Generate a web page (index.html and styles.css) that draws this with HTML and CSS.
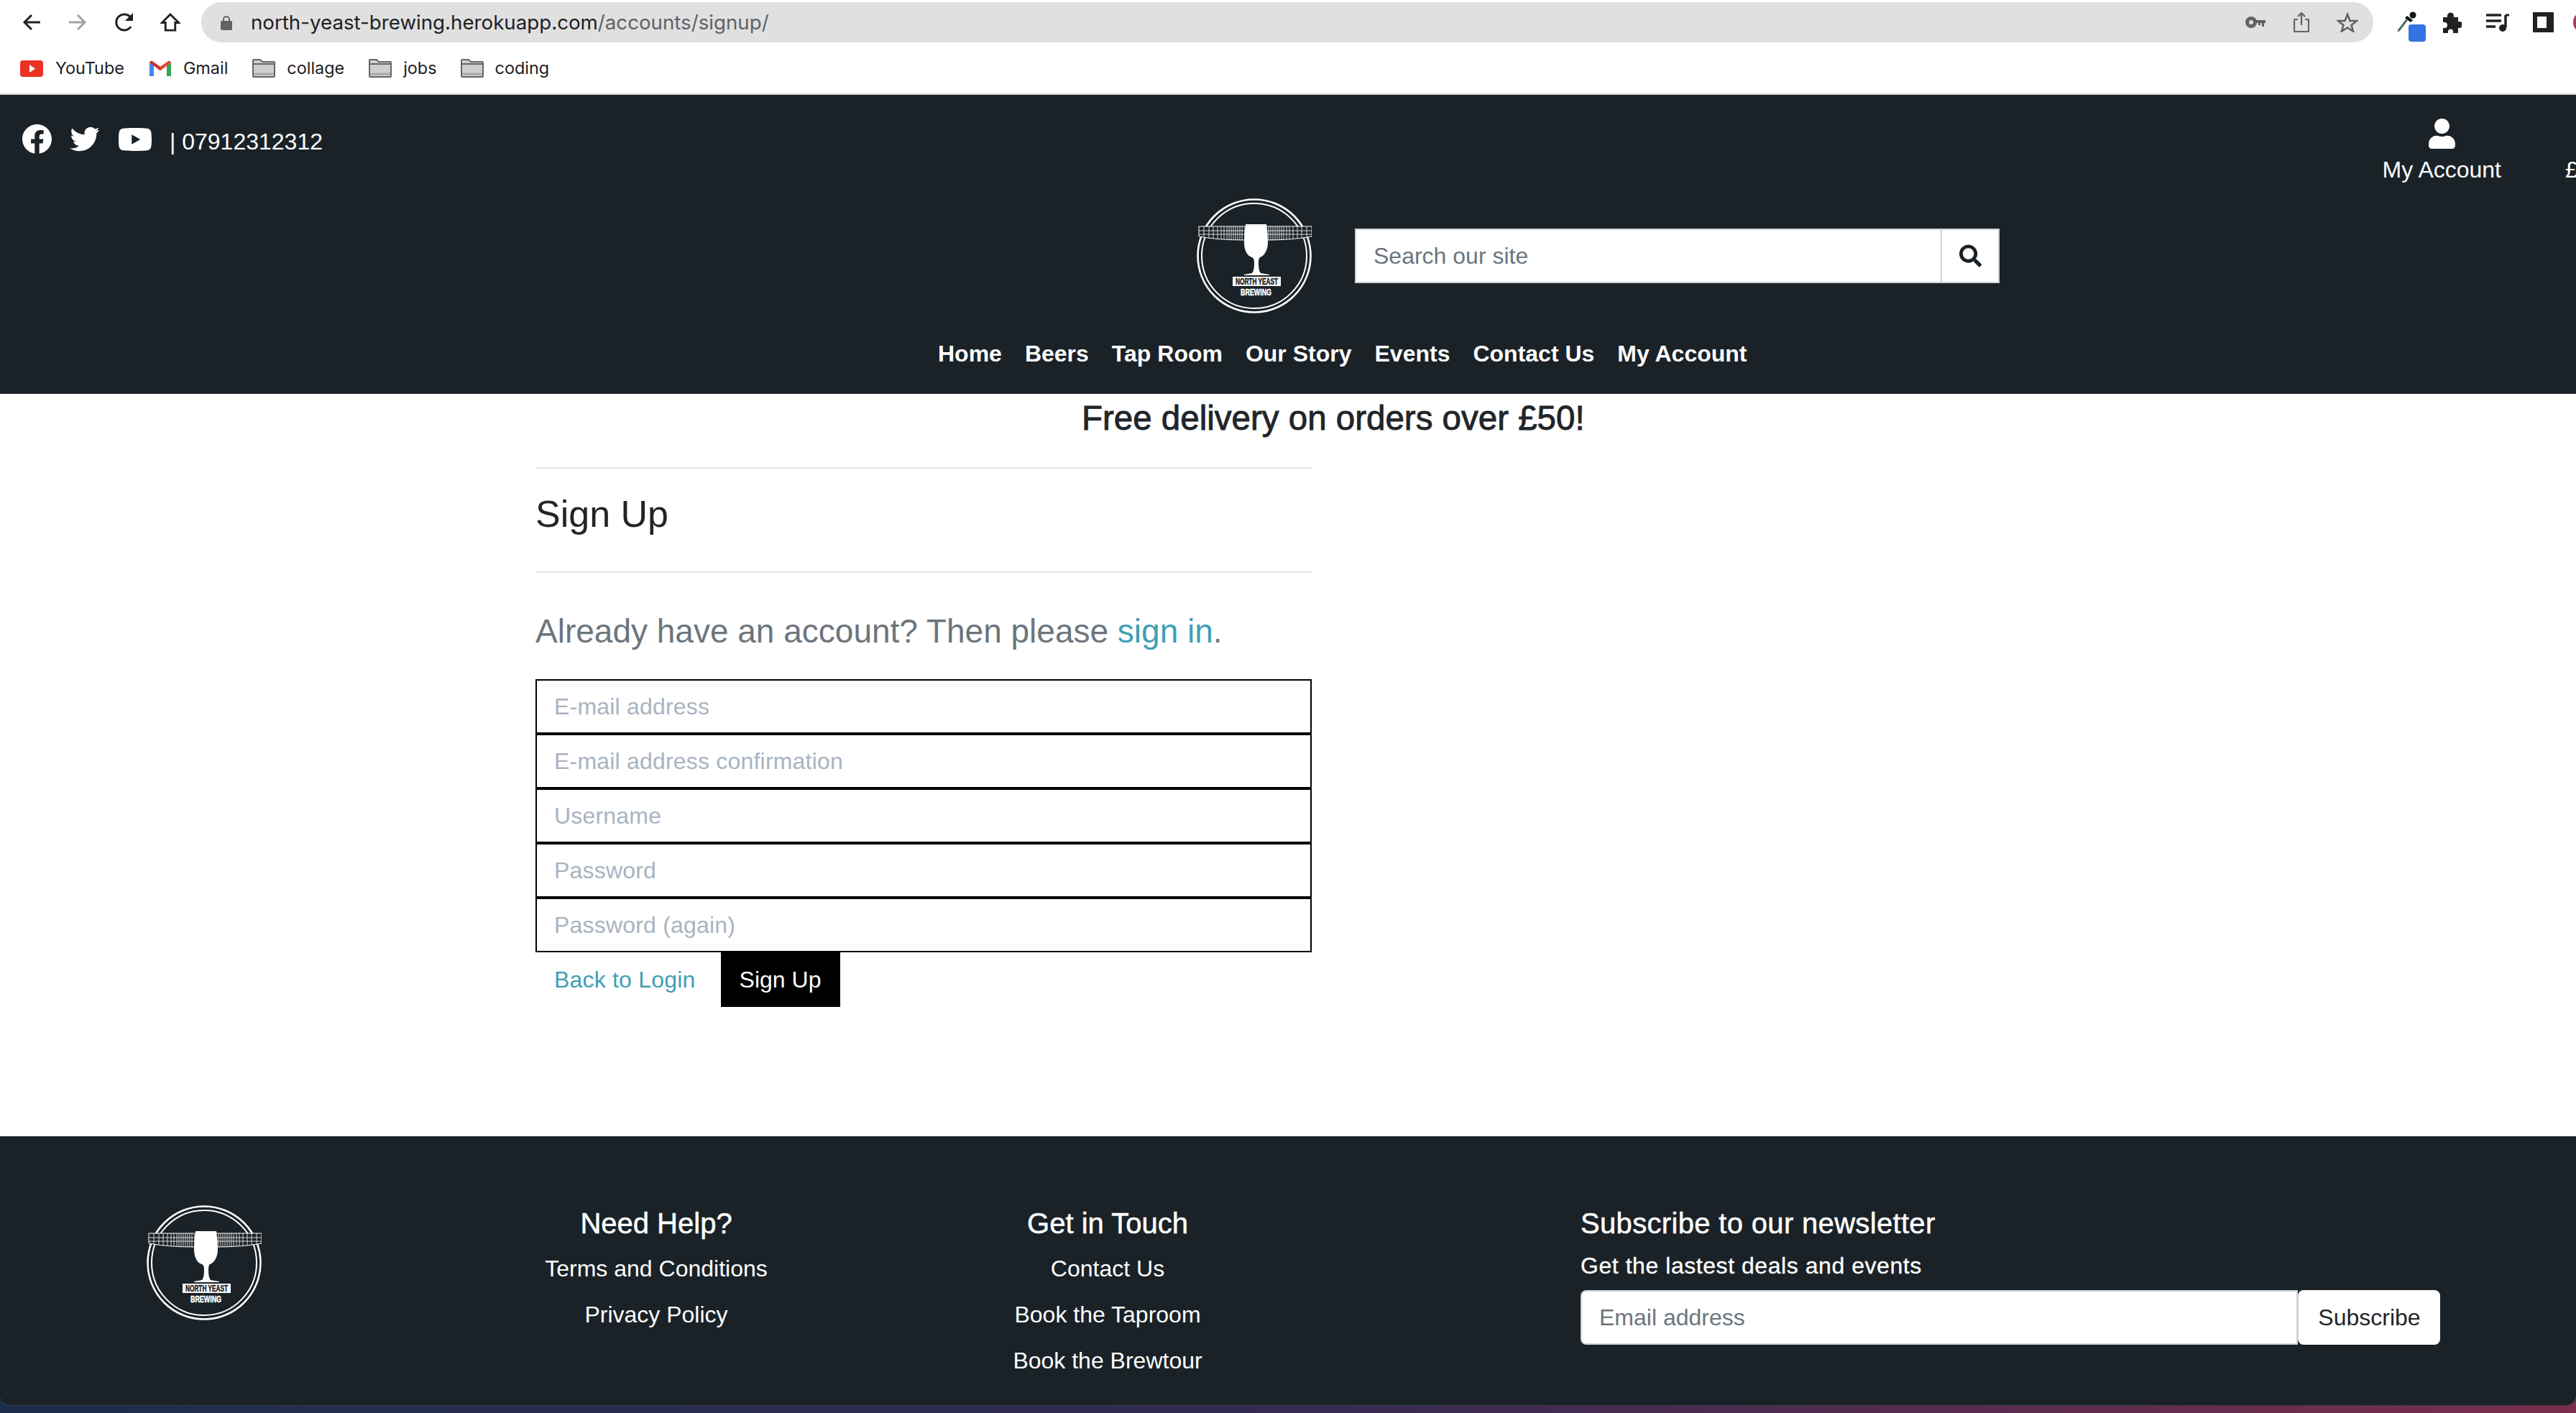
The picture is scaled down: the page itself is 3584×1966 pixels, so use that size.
FILE: index.html
```html
<!DOCTYPE html>
<html lang="en">
<head>
<meta charset="utf-8">
<title>Sign Up</title>
<link rel="stylesheet" href="styles.css">
</head>
<body>
<svg class="defs" width="0" height="0" aria-hidden="true">
  <symbol id="folder" viewBox="0 0 32 26">
    <path d="M1 24V2Q1 1 2 1H11L14 4H30Q31 4 31 5V24Q31 25 30 25H2Q1 25 1 24Z" fill="#cfcfcf" stroke="#666" stroke-width="2"/>
    <path d="M1 7H31" stroke="#666" stroke-width="2"/>
    <path d="M2 21H30" stroke="#aaa" stroke-width="3"/>
  </symbol>
</svg>

<header class="browser">
  <div class="toolbar">
    <svg class="ti nav-back" viewBox="0 0 26 26"><path d="M25 13H3M13 3L3 13L13 23" fill="none" stroke="#202124" stroke-width="3"/></svg>
    <svg class="ti nav-fwd" viewBox="0 0 26 26"><path d="M1 13H23M13 3L23 13L13 23" fill="none" stroke="#a3a3a3" stroke-width="3"/></svg>
    <svg class="ti nav-reload" viewBox="0 0 30 26"><path d="M24 19A11 11 0 1 1 24 7" fill="none" stroke="#202124" stroke-width="3"/><path d="M27 0V11H16Z" fill="#202124"/></svg>
    <svg class="ti nav-home" viewBox="0 0 28 27"><path d="M14 2L26 14H21V25H7V14H2Z" fill="none" stroke="#202124" stroke-width="3"/></svg>
    <div class="omnibox">
      <svg class="lock" viewBox="0 0 16 21"><path d="M4 9V6A4 4 0 0 1 12 6V9" fill="none" stroke="#5f6368" stroke-width="2"/><rect y="8" width="16" height="13" rx="2" fill="#5f6368"/></svg>
      <span class="url">north-yeast-brewing.herokuapp.com<span class="url-path">/accounts/signup/</span></span>
      <svg class="key" viewBox="0 0 28 16"><circle cx="8" cy="8" r="5.500" fill="none" stroke="#5f6368" stroke-width="5"/><path d="M13 5H28V9H26V14H23V9H21V12H18V9H13Z" fill="#5f6368"/></svg>
      <svg class="share" viewBox="0 0 22 28"><path d="M6 10H2Q1 10 1 11V26Q1 27 2 27H20Q21 27 21 26V11Q21 10 20 10H16M11 18V2M6 6L11 1L16 6" fill="none" stroke="#5f6368" stroke-width="2.200"/></svg>
      <svg class="star" viewBox="0 0 30 28"><path d="M15 3L18.500 12H28L20.500 18L23 26.500L15 21.500L7 26.500L9.500 18L2 12H11.500Z" fill="none" stroke="#5f6368" stroke-width="2.600"/></svg>
    </div>
    <div class="dropper">
      <svg class="dropper-icon" viewBox="0 0 27 30"><path d="M2 28L14 12" stroke="#6d9b78" stroke-width="3.500"/><path d="M1 29L13 13" fill="none" stroke="#222" stroke-width="1"/><path d="M14 7L22 13L19 16L11 10Z" fill="#111"/><circle cx="22" cy="6" r="4.500" fill="#111"/></svg>
      <span class="badge"></span>
    </div>
    <svg class="puzzle" viewBox="0 0 29 29"><path d="M3 7H9V5A4.500 4.500 0 0 1 18 5V7H24V13H26A4.500 4.500 0 0 1 26 22H24V29H17V27A3.500 3.500 0 0 0 10 27V29H3V22H5A4 4 0 0 0 5 14H3Z" fill="#202124"/></svg>
    <svg class="music" viewBox="0 0 32 25"><path d="M0 2H21M0 10H21M0 18H13" stroke="#202124" stroke-width="3.500"/><path d="M27 2V19" stroke="#202124" stroke-width="3.500"/><path d="M27 2H32" stroke="#202124" stroke-width="3"/><circle cx="23" cy="20" r="5" fill="#202124"/></svg>
    <svg class="side" viewBox="0 0 29 28"><path d="M0 0H29V28H0ZM6 6V22H19V6Z" fill="#202124" fill-rule="evenodd"/></svg>
    <span class="avatar"></span>
  </div>
  <div class="bookmarks">
    <a class="bm bm-yt"><svg class="bm-icon" viewBox="0 0 32 23"><rect width="32" height="23" rx="4" fill="#ea3323"/><path d="M13 6L21 11.500L13 17Z" fill="#fff"/></svg>YouTube</a>
    <a class="bm bm-gm"><svg class="bm-gmail" viewBox="0 0 30 24" preserveAspectRatio="none"><path d="M0 23V3L6 6V23H1Z" fill="#4285f4"/><path d="M24 23V6L30 3V23Z" fill="#34a853"/><path d="M0 3Q1 0 4 1L15 9V15Z" fill="#c5362b"/><path d="M30 3Q29 0 26 1L15 9V15Z" fill="#ea4335"/></svg>Gmail</a>
    <a class="bm bm-c"><svg class="bm-folder"><use href="#folder"/></svg>collage</a>
    <a class="bm bm-j"><svg class="bm-folder"><use href="#folder"/></svg>jobs</a>
    <a class="bm"><svg class="bm-folder"><use href="#folder"/></svg>coding</a>
  </div>
</header>

<section class="site-header">
  <div class="topbar">
    <div class="socials">
      <svg class="fb" viewBox="8 8 496 496"><path d="M504 256C504 119 393 8 256 8S8 119 8 256c0 123.780 90.690 226.380 209.250 245V327.690h-63V256h63v-54.640c0-62.150 37-96.480 93.670-96.480 27.140 0 55.520 4.840 55.520 4.840v61h-31.280c-30.800 0-40.410 19.120-40.410 38.730V256h68.780l-11 71.690h-57.780V501C413.310 482.380 504 379.780 504 256z"/></svg>
      <svg class="tw" viewBox="0 0 512 512"><path d="M459.370 151.716c.325 4.548.325 9.097.325 13.645 0 138.720-105.583 298.558-298.558 298.558-59.452 0-114.680-17.219-161.137-47.106 8.447.974 16.568 1.299 25.340 1.299 49.055 0 94.213-16.568 130.274-44.832-46.132-.975-84.792-31.188-98.112-72.772 6.498.974 12.995 1.624 19.818 1.624 9.421 0 18.843-1.300 27.614-3.573-48.081-9.747-84.143-51.980-84.143-102.985v-1.299c13.969 7.797 30.214 12.670 47.431 13.319-28.264-18.843-46.781-51.005-46.781-87.391 0-19.492 5.197-37.360 14.294-52.954 51.655 63.675 129.300 105.258 216.365 109.807-1.624-7.797-2.599-15.918-2.599-24.040 0-57.828 46.782-104.934 104.934-104.934 30.213 0 57.502 12.670 76.670 33.137 23.715-4.548 46.456-13.320 66.599-25.340-7.798 24.366-24.366 44.833-46.132 57.827 21.117-2.273 41.584-8.122 60.426-16.243-14.292 20.791-32.161 39.308-52.628 54.253z"/></svg>
      <svg class="yt" viewBox="15 64 546 384" preserveAspectRatio="none"><path d="M549.655 124.083c-6.281-23.650-24.787-42.276-48.284-48.597C458.781 64 288 64 288 64S117.220 64 74.629 75.486c-23.497 6.322-42.003 24.947-48.284 48.597-11.412 42.867-11.412 132.305-11.412 132.305s0 89.438 11.412 132.305c6.281 23.650 24.787 41.500 48.284 47.821C117.220 448 288 448 288 448s170.780 0 213.371-11.486c23.497-6.321 42.003-24.171 48.284-47.821 11.412-42.867 11.412-132.305 11.412-132.305s0-89.438-11.412-132.305zm-317.510 213.508V175.185l142.739 81.205-142.739 81.201z"/></svg>
      <span class="phone">| 07912312312</span>
    </div>
    <a class="account">
      <svg class="user" viewBox="0 0 448 512"><path d="M224 256c70.700 0 128-57.300 128-128S294.700 0 224 0 96 57.300 96 128s57.300 128 128 128zm89.600 32h-16.700c-22.200 10.200-46.900 16-72.900 16s-50.600-5.800-72.900-16h-16.700C60.200 288 0 348.200 0 422.400V464c0 26.500 21.500 48 48 48h352c26.500 0 48-21.500 48-48v-41.600c0-74.200-60.200-134.400-134.400-134.400z"/></svg>
      <span>My Account</span>
    </a>
    <span class="cart">£</span>
  </div>
  <div class="brand">
    <svg class="logo" viewBox="0 0 160 160">
      <g id="brand-mark">
        <circle cx="80" cy="80" r="78.500" fill="none" stroke="#fff" stroke-width="2.600"/>
        <circle cx="80" cy="80" r="73" fill="none" stroke="#fff" stroke-width="2"/>
        <g id="wing">
          <path d="M3 39H67V58Q30 58 3 53Z" fill="#1a2228" stroke="#fff" stroke-width="1"/>
          <path d="M3 45H67M3 50H67" stroke="#fff" stroke-width=".8"/>
          <path d="M10 39V54M17 39V55M23 39V56M29 39V56M34 39V57M38 39V57M42 39V57M45 39V58M48 39V58M51 39V58M54 39V58M57 39V58M60 39V58M63 39V58" stroke="#fff" stroke-width=".8"/>
        </g>
        <use href="#wing" transform="matrix(-1 0 0 1 163 0)"/>
        <path d="M66 62Q66 48 68 36H97Q99 48 99 62C99 74 92 81 88 82Q86 83 86 90C86 97 87 102 89 104L101 106V107H66V106L77 104C79 102 80 97 80 90Q80 83 77 82C72 81 66 74 66 62Z" fill="#fff"/>
        <rect x="50" y="109" width="67" height="13" fill="#fff"/>
        <text x="83.500" y="120" text-anchor="middle" textLength="59" lengthAdjust="spacingAndGlyphs" class="logo-dark">NORTH YEAST</text>
        <text x="82.500" y="135" text-anchor="middle" textLength="43" lengthAdjust="spacingAndGlyphs" class="logo-light">BREWING</text>
      </g>
    </svg>
    <form class="search">
      <input class="search-input" type="text" placeholder="Search our site">
      <button class="search-btn" type="button"><svg class="search-icon" viewBox="0 0 512 512"><path d="M505 442.700L405.300 343c-4.500-4.500-10.600-7-17-7H372c27.600-35.300 44-79.700 44-128C416 93.100 322.900 0 208 0S0 93.100 0 208s93.100 208 208 208c48.300 0 92.700-16.400 128-44v16.300c0 6.400 2.500 12.500 7 17l99.700 99.700c9.400 9.400 24.600 9.400 33.900 0l28.300-28.300c9.400-9.400 9.400-24.600.1-34zM208 336c-70.700 0-128-57.200-128-128 0-70.700 57.200-128 128-128 70.700 0 128 57.200 128 128 0 70.700-57.200 128-128 128z"/></svg></button>
    </form>
  </div>
  <nav class="mainnav">
    <a>Home</a><a>Beers</a><a>Tap Room</a><a>Our Story</a><a>Events</a><a>Contact Us</a><a>My Account</a>
  </nav>
</section>

<div class="page">
  <p class="promo">Free delivery on orders over £50!</p>
  <main class="content">
    <h1 class="title">Sign Up</h1>
    <p class="lead">Already have an account? Then please <a class="link">sign in</a>.</p>
    <form class="signup">
      <input class="field" type="email" placeholder="E-mail address">
      <input class="field" type="email" placeholder="E-mail address confirmation">
      <input class="field" type="text" placeholder="Username">
      <input class="field" type="password" placeholder="Password">
      <input class="field" type="password" placeholder="Password (again)">
      <div class="actions">
        <a class="link back">Back to Login</a>
        <button class="submit" type="button">Sign Up</button>
      </div>
    </form>
  </main>
</div>

<footer class="footer">
  <div class="f-logo"><svg class="logo" viewBox="0 0 160 160"><use href="#brand-mark"/></svg></div>
  <div class="f-col f-help">
    <h2 class="f-title">Need Help?</h2>
    <a>Terms and Conditions</a>
    <a>Privacy Policy</a>
  </div>
  <div class="f-col f-touch">
    <h2 class="f-title">Get in Touch</h2>
    <a>Contact Us</a>
    <a>Book the Taproom</a>
    <a>Book the Brewtour</a>
  </div>
  <div class="f-news">
    <h2 class="f-title">Subscribe to our newsletter</h2>
    <p class="f-sub">Get the lastest deals and events</p>
    <form class="news-form">
      <input class="news-input" type="email" placeholder="Email address">
      <button class="news-btn" type="button">Subscribe</button>
    </form>
  </div>
</footer>
</body>
</html>
```
FILE: styles.css
```css
* { box-sizing: border-box; }
html, body { margin: 0; padding: 0; }
body {
  width: 3584px;
  height: 1966px;
  overflow: hidden;
  font-family: "Liberation Sans", Arial, sans-serif;
  font-size: 32px;
  line-height: 48px;
  color: #212529;
  background: linear-gradient(90deg, #1c2d4d 0%, #342a52 50%, #7a2d4c 100%);
}
.defs { position: absolute; }
input, button { font: inherit; margin: 0; }

/* browser chrome */
.browser { background: #fff; height: 132px; border-bottom: 2px solid #d0d0d0; overflow: hidden; }
.toolbar { display: flex; align-items: center; height: 60px; padding: 2px 0 0 31px; font-family: Inter, sans-serif; }
.ti { height: 26px; flex: none; }
.nav-back { width: 26px; }
.nav-fwd { width: 26px; margin-left: 38px; }
.nav-reload { width: 30px; margin-left: 37px; }
.nav-home { width: 28px; margin-left: 35px; }
.omnibox {
  display: flex; align-items: center; flex: none;
  width: 3022px; height: 56px; margin-left: 29px; padding: 0 21px 0 27px;
  background: #e0e0e0; border-radius: 28px;
}
.lock { width: 16px; height: 21px; flex: none; }
.url { margin-left: 26px; font-size: 27.700px; color: #202124; white-space: nowrap; }
.url-path { color: #5f6368; }
.key { width: 28px; height: 16px; margin-left: auto; }
.share { width: 22px; height: 28px; margin-left: 39px; }
.star { width: 30px; height: 28px; margin-left: 38px; }
.dropper { position: relative; flex: none; width: 27px; height: 30px; margin: -2px 0 0 33px; }
.dropper-icon { width: 27px; height: 30px; display: block; }
.badge { position: absolute; left: 16px; top: 19px; width: 24px; height: 24px; background: #3474e0; border-radius: 4px; }
.puzzle { width: 29px; height: 29px; flex: none; margin-left: 34px; }
.music { width: 32px; height: 25px; flex: none; margin-left: 34px; }
.side { width: 29px; height: 28px; flex: none; margin-left: 33px; }
.avatar { width: 30px; height: 30px; flex: none; margin-left: 27px; border-radius: 50%; background: #b5315a; }
.bookmarks { display: flex; align-items: center; height: 70px; padding-left: 28px; font-family: Inter, sans-serif; font-size: 23.400px; color: #202124; }
.bm { display: flex; align-items: center; white-space: nowrap; }
.bm-icon { width: 32px; height: 23px; margin-right: 17px; flex: none; }
.bm-gmail { width: 30px; height: 23px; margin-right: 17px; flex: none; }
.bm-folder { width: 32px; height: 26px; margin-right: 16px; flex: none; }
.bm-yt { margin-right: 35px; }
.bm-gm { margin-right: 34px; }
.bm-c { margin-right: 34px; }
.bm-j { margin-right: 33px; }

/* site header */
.site-header { height: 416px; background: #1a2228; color: #fff; overflow: hidden; }
.topbar { display: flex; align-items: flex-start; height: 144px; }
.socials { display: flex; align-items: flex-start; padding: 41px 0 0 31px; }
.socials svg { fill: #fff; height: 41px; flex: none; }
.fb { width: 41px; }
.tw { width: 42px; margin-left: 25px; }
.socials .yt { width: 46px; height: 32px; margin: 5px 0 0 26px; }
.phone { margin: 4px 0 0 25px; line-height: 41px; }
.account { display: flex; flex-direction: column; align-items: center; margin-left: auto; padding-top: 33px; white-space: nowrap; }
.user { width: 37px; height: 42px; fill: #fff; margin-bottom: 5px; }
.cart { flex: none; width: 15px; margin: 80px 0 0 89px; overflow: hidden; }
.brand { display: flex; align-items: center; gap: 60px; padding-left: 1665px; }
.logo { width: 160px; height: 160px; display: block; }
.logo-dark { font: 700 12px "Liberation Sans", sans-serif; fill: #1a2228; stroke: #1a2228; stroke-width: .5; }
.logo-light { font: 700 13px "Liberation Sans", sans-serif; fill: #fff; stroke: #fff; stroke-width: .5; }
.search { display: flex; width: 897px; height: 76px; }
.search-input { flex: 1; min-width: 0; padding: 0 24px; background: #fff; border: 2px solid #ced4da; border-right: 0; border-radius: 0; color: #495057; outline: 0; }
.search-input::placeholder, .news-input::placeholder { color: #6c757d; opacity: 1; }
.search-btn { width: 82px; padding: 0; display: flex; align-items: center; justify-content: center; background: #fff; border: 2px solid #ced4da; }
.search-icon { width: 31px; height: 32px; fill: #1a2228; }
.mainnav { display: flex; margin-top: 32px; padding-left: 1289px; font-weight: 700; }
.mainnav a { padding: 0 16px; white-space: nowrap; }

/* promo + form */
.page { background: #fff; padding: 5px 0 180px; }
.promo { margin: 0; padding-left: 1505px; font-size: 47.500px; line-height: 58px; -webkit-text-stroke: .9px #212529; white-space: nowrap; }
.content { width: 1080px; margin-left: 745px; }
.title { margin: 39px 0 0; padding: 32px 0 48px; border-top: 2px solid #e6e6e6; border-bottom: 2px solid #e6e6e6; font-size: 52px; line-height: 63px; font-weight: 400; height: 147px; }
.lead { margin: 45px 0 31px; font-size: 46px; line-height: 72px; color: #6c757d; white-space: nowrap; }
.link { color: #3f9fb5; }
.signup { display: flex; flex-direction: column; }
.field { display: block; width: 100%; height: 76px; padding: 0 24px; background: #fff; border: 2px solid #000; border-radius: 0; outline: 0; }
.field::placeholder { color: #a9b3c1; opacity: 1; letter-spacing: .2px; }
.actions { display: flex; gap: 9px; height: 76px; }
.back { padding: 14px 26px; letter-spacing: .2px; }
.submit { width: 166px; padding: 0; background: #000; color: #fff; border: 0; }

/* footer */
.footer {
  display: flex; height: 374px; padding-top: 96px;
  background: #1a2228; color: #fff;
  border-radius: 0 0 14px 14px;
  box-shadow: 0 1px 0 #3a3f47;
}
.f-logo { width: 568px; padding-left: 204px; flex: none; }
.f-col { display: flex; flex-direction: column; align-items: center; flex: none; }
.f-help { width: 690px; }
.f-touch { width: 566px; }
.f-title { margin: 1px 0 15px; font-size: 40px; line-height: 48px; font-weight: 400; -webkit-text-stroke: .5px #fff; white-space: nowrap; }
.f-col a { margin-bottom: 16px; white-space: nowrap; }
.f-news { margin-left: 375px; width: 1196px; }
.f-news .f-title { margin-bottom: 11px; letter-spacing: .33px; }
.f-sub { margin: 0 0 10px; letter-spacing: .55px; -webkit-text-stroke: .3px #fff; }
.news-form { display: flex; height: 76px; }
.news-input { flex: 1; min-width: 0; padding: 0 24px; background: #fff; border: 2px solid #ced4da; border-radius: 8px 0 0 8px; outline: 0; }
.news-btn { width: 198px; padding: 0; background: #fff; color: #212529; border: 0; border-left: 1px solid #ced4da; border-radius: 8px; }
```
